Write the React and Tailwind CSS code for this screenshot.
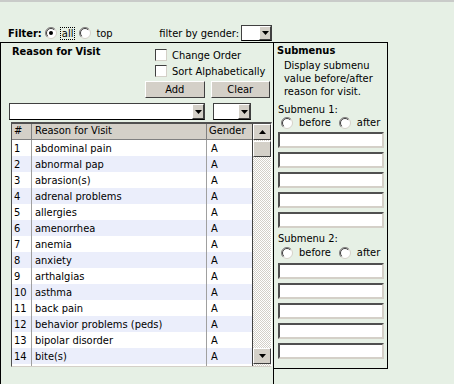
import React from 'react';

const rows = [
  'abdominal pain', 'abnormal pap', 'abrasion(s)', 'adrenal problems', 'allergies',
  'amenorrhea', 'anemia', 'anxiety', 'arthalgias', 'asthma', 'back pain',
  'behavior problems (peds)', 'bipolar disorder', 'bite(s)',
];

const Radio = ({ checked }) => (
  <svg width="12" height="12" viewBox="0 0 12 12" className="shrink-0">
    <circle cx="6" cy="6" r="5.5" fill="#fff" stroke="#d4d0c8" />
    <path d="M2.1 9.9 A5.5 5.5 0 0 1 9.9 2.1" fill="none" stroke="#808080" />
    <path d="M2.8 9.2 A4.5 4.5 0 0 1 9.2 2.8" fill="none" stroke="#404040" />
    {checked && <circle cx="6" cy="6" r="2" fill="#000" />}
  </svg>
);

const Check = () => (
  <div className="w-3 h-3 shrink-0 bg-white border-t border-l border-[#404040] border-r-[#d4d0c8] border-b-[#d4d0c8] border-r border-b" />
);

const Arrow = ({ up }) => (
  <svg width="7" height="4" viewBox="0 0 7 4">
    <path d={up ? 'M3.5 0 L7 4 L0 4 Z' : 'M0 0 L7 0 L3.5 4 Z'} fill="#000" />
  </svg>
);

const Btn3d = ({ className = '', children }) => (
  <div className={`flex items-center justify-center bg-[#d4d0c8] border border-t-white border-l-white border-r-[#404040] border-b-[#404040] ${className}`}>
    {children}
  </div>
);

const Select = ({ className = '' }) => (
  <div className={`flex bg-white border border-t-[#404040] border-l-[#404040] border-r-[#404040] border-b-black ${className}`}>
    <div className="flex-1" />
    <Btn3d className="w-[12px] h-full">
      <Arrow />
    </Btn3d>
  </div>
);

const TextBox = () => (
  <div className="ml-[4px] mb-1 w-[106px] h-4 bg-white border-2 border-t-[#505050] border-l-[#505050] border-r-[#d4d0c8] border-b-[#d4d0c8]" />
);

const RadioPair = () => (
  <div className="flex items-center h-[13px] pl-[7px]">
    <Radio />
    <span className="ml-[6px]">before</span>
    <span className="ml-[8px]"><Radio /></span>
    <span className="ml-[6px]">after</span>
  </div>
);

export default function App() {
  return (
    <div className="w-[454px] h-[384px] overflow-hidden bg-[#e6f0e5] border-t-2 border-[#c9cbc9] text-[11px] leading-[13px] text-black font-[family-name:'DejaVu_Sans_Condensed','Liberation_Sans',sans-serif]">
      {/* filter row */}
      <div className="mt-[23px] ml-2 w-[264px] h-4 flex items-center justify-between">
        <div className="flex items-center">
          <span className="font-bold">Filter:</span>
          <span className="ml-[3px]"><Radio checked /></span>
          <span className="ml-[3px] px-px border border-dotted border-black leading-[11px]">all</span>
          <span className="ml-[4px]"><Radio /></span>
          <span className="ml-[5px]">top</span>
        </div>
        <div className="flex items-center">
          <span>filter by gender:</span>
          <Select className="ml-[2px] w-[31px] h-4" />
        </div>
      </div>

      <div className="mt-px flex items-start">
        {/* left panel */}
        <div className="w-[274px] h-[343px] border-l border-t border-r border-black">
          <div className="flex">
            <div className="pl-[11px] pt-[2px] font-bold">Reason for Visit</div>
            <div className="ml-auto mr-[3px] w-[125px] pt-1">
              <div className="flex items-center h-4 pl-[10px] gap-[5px]">
                <Check />
                <span>Change Order</span>
              </div>
              <div className="flex items-center h-4 pl-[10px] gap-[5px]">
                <Check />
                <span>Sort Alphabetically</span>
              </div>
              <div className="mt-[2px] flex gap-[6px]">
                <Btn3d className="w-[60px] h-[17px]">Add</Btn3d>
                <Btn3d className="w-[60px] h-[17px]">Clear</Btn3d>
              </div>
            </div>
          </div>

          <div className="mt-[5px] flex h-[17px]">
            <Select className="ml-[8px] w-[196px] h-full" />
            <Select className="ml-[8px] w-[38px] h-full" />
          </div>

          {/* list */}
          <div className="mt-[2px] ml-[10px] w-[261px] flex border-t-2 border-l border-r border-b border-t-[#505050] border-l-[#505050] border-r-white border-b-[#d4d0c8]">
            <div className="w-[240px] h-[242px] overflow-hidden bg-white">
              <div className="flex h-4 bg-[#d4d0c8] border-b border-[#808080]">
                <div className="w-[20px] pl-[2px] border-r border-[#808080]">#</div>
                <div className="w-[175px] pl-[3px] border-r border-[#808080]">Reason for Visit</div>
                <div className="w-[45px] pl-[2px]">Gender</div>
              </div>
              {rows.map((r, i) => (
                <div key={i} className={`flex h-4 items-center ${i % 2 ? 'bg-[#ebeefb]' : 'bg-white'}`}>
                  <div className="w-[20px] pl-[2px] border-r border-[#a0a0a0] h-full flex items-center">{i + 1}</div>
                  <div className="w-[175px] pl-[3px] border-r border-[#a0a0a0] h-full flex items-center">{r}</div>
                  <div className="w-[45px] pl-[4px]">A</div>
                </div>
              ))}
              <div className="flex h-4 bg-white">
                <div className="w-[20px] border-r border-[#a0a0a0]" />
                <div className="w-[175px] border-r border-[#a0a0a0]" />
              </div>
            </div>
            <div className="w-[19px] h-[242px] flex flex-col border-l border-[#404040] bg-[repeating-conic-gradient(#d4d0c8_0_25%,#ffffff_0_50%)] bg-[length:2px_2px]">
              <Btn3d className="h-4 w-full"><Arrow up /></Btn3d>
              <Btn3d className="h-4 w-full mt-px" />
              <div className="flex-1" />
              <Btn3d className="h-4 w-full mb-[2px]"><Arrow /></Btn3d>
            </div>
          </div>
        </div>

        {/* right panel */}
        <div className="w-[114px] h-[327px] border-t border-r border-b border-black">
          <div className="pl-[3px] pt-px font-bold">Submenus</div>
          <div className="mt-[2px] pl-[10px]">
            <div>Display submenu</div>
            <div>value before/after</div>
            <div>reason for visit.</div>
          </div>
          <div className="mt-[5px] pl-[4px]">Submenu 1:</div>
          <RadioPair />
          <div className="mt-[3px]">
            {[0, 1, 2, 3, 4].map((k) => <TextBox key={k} />)}
          </div>
          <div className="mt-[4px] pl-[4px]">Submenu 2:</div>
          <div className="mt-px"><RadioPair /></div>
          <div className="mt-[4px]">
            {[0, 1, 2, 3, 4].map((k) => <TextBox key={k} />)}
          </div>
        </div>
      </div>
    </div>
  );
}
